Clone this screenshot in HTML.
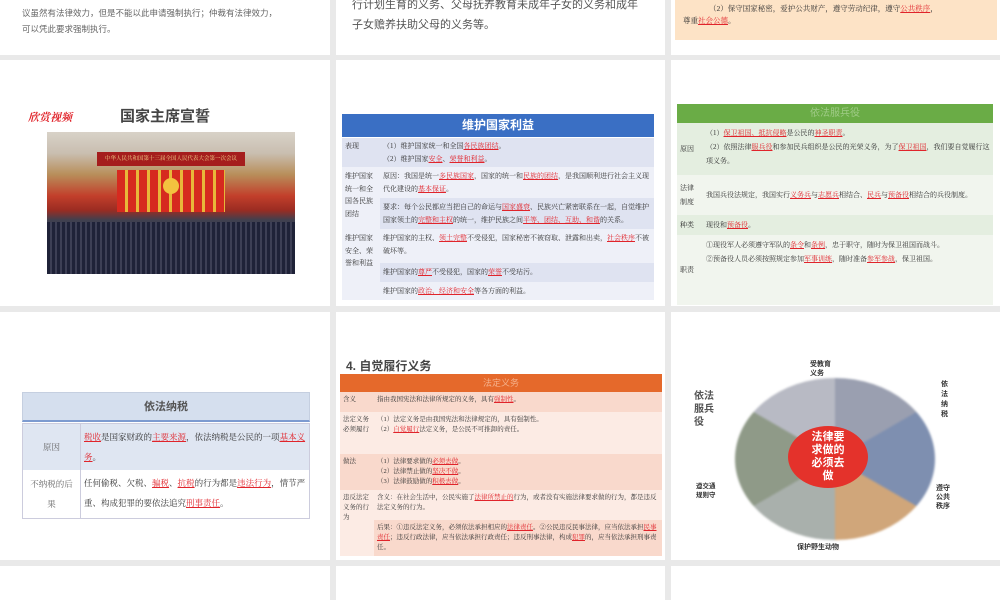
<!DOCTYPE html>
<html><head><meta charset="utf-8"><style>
*{margin:0;padding:0;box-sizing:border-box}
body{width:1000px;height:600px;background:#e9e9e9;position:relative;overflow:hidden;font-family:"Liberation Serif","Noto Serif CJK SC",serif;color:#333}
.s{position:absolute;background:#fff;overflow:hidden}
.r{color:#e0242b;text-decoration:underline}
.sans{font-family:"Liberation Sans","Noto Sans CJK SC",sans-serif}
table{border-collapse:collapse;width:100%}
td{vertical-align:top}
</style></head><body>
<!-- row 0 -->
<div class="s" style="left:0;top:0;width:330px;height:55px">
<div class="sans" style="position:absolute;left:22px;top:5px;font-size:8.5px;color:#666;line-height:16px">议虽然有法律效力，但是不能以此申请强制执行；仲裁有法律效力，<br>可以凭此要求强制执行。</div></div>
<div class="s" style="left:336px;top:0;width:329px;height:55px">
<div class="sans" style="position:absolute;left:16px;top:-5px;font-size:11px;color:#555;line-height:20px">行计划生育的义务、父母抚养教育未成年子女的义务和成年<br>子女赡养扶助父母的义务等。</div></div>
<div class="s" style="left:671px;top:0;width:329px;height:55px">
<div style="position:absolute;left:4px;top:0;width:322px;height:40px;background:#fde3c6;font-size:7.5px;padding:3px 0 0 34px;line-height:12px">（2）保守国家秘密，爱护公共财产，遵守劳动纪律，遵守<span class="r">公共秩序</span>，<br><span style="margin-left:-26px">尊重</span><span class="r">社会公德</span>。</div></div>
<!-- row 1 -->
<div class="s" style="left:0;top:60px;width:330px;height:246px">
<div style="position:absolute;left:28px;top:49px;font-size:11px;color:#e0242b;font-weight:bold;font-style:italic">欣赏视频</div>
<div class="sans" style="position:absolute;left:120px;top:45px;font-size:15px;font-weight:bold;color:#444">国家主席宣誓</div>
<div style="position:absolute;left:47px;top:72px;width:248px;height:142px;background:linear-gradient(#d8d2c8 0,#c9beb0 15%,#b88e5a 30%,#c23f2b 45%,#9b2c22 55%,#40404f 62%,#2a2d45 100%)">
<div style="position:absolute;left:50px;top:20px;width:148px;height:14px;background:#a51d1d;color:#f6d78d;font-size:5.5px;text-align:center;line-height:14px">中华人民共和国第十三届全国人民代表大会第一次会议</div>
<div style="position:absolute;left:70px;top:38px;width:108px;height:42px;background:repeating-linear-gradient(90deg,#d62a1f 0 8px,#e8b73a 8px 11px)"></div>
<div style="position:absolute;left:116px;top:46px;width:16px;height:16px;border-radius:50%;background:#f3c23f"></div>
<div style="position:absolute;left:0;top:90px;width:248px;height:52px;background:repeating-linear-gradient(90deg,#1f2238 0 3px,#3d3f55 3px 5px)"></div>
</div></div>
<div class="s" style="left:336px;top:60px;width:329px;height:246px">
<div class="sans" style="position:absolute;left:6px;top:54px;width:312px;height:23px;background:#3a6fc4;color:#fff;font-size:12px;font-weight:bold;text-align:center;line-height:23px">维护国家利益</div>
<table style="position:absolute;left:6px;top:78px;width:312px;font-size:7px;line-height:12.5px">
<tr style="background:#dfe3f1"><td style="width:38px;padding:2px 3px;height:29px">表现</td><td style="padding:2px 3px">（1）维护国家统一和全国<span class="r">各民族团结</span>。<br>（2）维护国家<span class="r">安全</span>、<span class="r">荣誉和利益</span>。</td></tr>
<tr style="background:#eef0f8"><td rowspan="2" style="padding:3px">维护国家统一和全国各民族团结</td><td style="padding:3px">原因：我国是统一<span class="r">多民族国家</span>，国家的统一和<span class="r">民族的团结</span>，是我国顺利进行社会主义现代化建设的<span class="r">基本保证</span>。</td></tr>
<tr style="background:#dfe3f1"><td style="padding:3px">要求：每个公民都应当把自己的命运与<span class="r">国家盛衰</span>、民族兴亡紧密联系在一起，自觉维护国家领土的<span class="r">完整和主权</span>的统一，维护民族之间<span class="r">平等、团结、互助、和谐</span>的关系。</td></tr>
<tr style="background:#eef0f8"><td rowspan="3" style="padding:3px">维护国家安全、荣誉和利益</td><td style="padding:3px;height:34px">维护国家的主权、<span class="r">领土完整</span>不受侵犯，国家秘密不被窃取、泄露和出卖，<span class="r">社会秩序</span>不被破坏等。</td></tr>
<tr style="background:#dfe3f1"><td style="padding:3px">维护国家的<span class="r">尊严</span>不受侵犯，国家的<span class="r">荣誉</span>不受玷污。</td></tr>
<tr style="background:#eef0f8"><td style="padding:3px">维护国家的<span class="r">政治、经济和安全</span>等各方面的利益。</td></tr>
</table></div>
<div class="s" style="left:671px;top:60px;width:329px;height:246px">
<div class="sans" style="position:absolute;left:6px;top:44px;width:316px;height:19px;background:#6aac46;color:#9fcb86;font-size:10px;text-align:center;line-height:19px">依法服兵役</div>
<table style="position:absolute;left:6px;top:63px;width:316px;font-size:7px;line-height:14px">
<tr style="background:#e4eee0"><td style="width:26px;padding:3px;height:52px;vertical-align:middle">原因</td><td style="padding:3px">（1）<span class="r">保卫祖国、抵抗侵略</span>是公民的<span class="r">神圣职责</span>。<br>（2）依照法律<span class="r">服兵役</span>和参加民兵组织是公民的光荣义务，为了<span class="r">保卫祖国</span>，我们要自觉履行这项义务。</td></tr>
<tr style="background:#f1f5ee"><td style="padding:3px;height:40px;vertical-align:middle">法律制度</td><td style="padding:3px;vertical-align:middle">我国兵役法规定，我国实行<span class="r">义务兵</span>与<span class="r">志愿兵</span>相结合、<span class="r">民兵</span>与<span class="r">预备役</span>相结合的兵役制度。</td></tr>
<tr style="background:#e4eee0"><td style="padding:3px">种类</td><td style="padding:3px">现役和<span class="r">预备役</span>。</td></tr>
<tr style="background:#f1f5ee"><td style="padding:3px;height:70px;vertical-align:middle">职责</td><td style="padding:3px">①现役军人必须遵守军队的<span class="r">条令</span>和<span class="r">条例</span>，忠于职守，随时为保卫祖国而战斗。<br>②预备役人员必须按照规定参加<span class="r">军事训练</span>，随时准备<span class="r">参军参战</span>，保卫祖国。</td></tr>
</table></div>
<!-- row 2 -->
<div class="s" style="left:0;top:312px;width:330px;height:248px">
<div class="sans" style="position:absolute;left:22px;top:80px;width:288px;height:30px;background:#d5dfee;border:1px solid #c5cfe0;border-bottom:2px solid #7d9bd0;font-size:11px;font-weight:bold;color:#555;text-align:center;line-height:28px">依法纳税</div>
<table style="position:absolute;left:22px;top:111px;width:288px;font-size:8.5px;line-height:20px;border:1px solid #ccd">
<tr style="background:#dfe6f2"><td style="width:58px;padding:4px;text-align:center;vertical-align:middle;color:#666;border-right:1px solid #ccd">原因</td><td style="padding:3px">  <span class="r">税收</span>是国家财政的<span class="r">主要来源</span>，依法纳税是公民的一项<span class="r">基本义务</span>。</td></tr>
<tr><td style="padding:4px;text-align:center;vertical-align:middle;color:#666;border-right:1px solid #ccd">不纳税的后果</td><td style="padding:3px">任何偷税、欠税、<span class="r">骗税</span>、<span class="r">抗税</span>的行为都是<span class="r">违法行为</span>，情节严重、构成犯罪的要依法追究<span class="r">刑事责任</span>。</td></tr>
</table></div>
<div class="s" style="left:336px;top:312px;width:329px;height:248px">
<div class="sans" style="position:absolute;left:10px;top:45px;font-size:12px;font-weight:bold;color:#444">4. 自觉履行义务</div>
<div class="sans" style="position:absolute;left:4px;top:62px;width:322px;height:18px;background:#e5692b;color:#f5b08a;font-size:9px;text-align:center;line-height:18px">法定义务</div>
<table style="position:absolute;left:4px;top:80px;width:322px;font-size:6.5px;line-height:10px">
<tr style="background:#f9d9cc"><td style="width:34px;padding:3px;height:20px">含义</td><td style="padding:3px">指由我国宪法和法律所规定的义务，具有<span class="r">强制性</span>。</td></tr>
<tr style="background:#fcebe4"><td style="padding:3px;height:42px">法定义务必须履行</td><td style="padding:3px">（1）法定义务是由我国宪法和法律规定的，具有强制性。<br>（2）<span class="r">自觉履行</span>法定义务，是公民不可推卸的责任。</td></tr>
<tr style="background:#f9d9cc"><td style="padding:3px;height:36px">做法</td><td style="padding:3px">（1）法律要求做的<span class="r">必须去做</span>。<br>（2）法律禁止做的<span class="r">坚决不做</span>。<br>（3）法律鼓励做的<span class="r">积极去做</span>。</td></tr>
<tr style="background:#fcebe4"><td rowspan="2" style="padding:3px">违反法定义务的行为</td><td style="padding:3px;height:30px">含义：在社会生活中，公民实施了<span class="r">法律所禁止的</span>行为，或者没有实施法律要求做的行为，都是违反法定义务的行为。</td></tr>
<tr style="background:#f9d9cc"><td style="padding:3px">后果：①违反法定义务，必须依法承担相应的<span class="r">法律责任</span>。②公民违反民事法律，应当依法承担<span class="r">民事责任</span>；违反行政法律，应当依法承担行政责任；违反刑事法律，构成<span class="r">犯罪</span>的，应当依法承担刑事责任。</td></tr>
</table></div>
<div class="s sans" style="left:671px;top:312px;width:329px;height:248px">
<div style="position:absolute;left:64px;top:66px;width:200px;height:162px;border-radius:50%;background:conic-gradient(#9a9fb0 0 60deg,#7e8fb0 60deg 120deg,#d0a67a 120deg 180deg,#a9b0ac 180deg 240deg,#8f9a88 240deg 300deg,#b8bac4 300deg 360deg);filter:blur(1px)"></div>
<div style="position:absolute;left:117px;top:114px;width:80px;height:62px;border-radius:50%;background:#e4322b;color:#fff;font-size:11px;font-weight:bold;text-align:center;line-height:13px;padding-top:5px">法律要<br>求做的<br>必须去<br>做</div>
<div style="position:absolute;left:139px;top:48px;font-size:7px;font-weight:bold;line-height:9px">受教育<br>义务</div>
<div style="position:absolute;left:23px;top:78px;font-size:10px;font-weight:bold;line-height:13px;color:#555">依法<br>服兵<br>役</div>
<div style="position:absolute;left:270px;top:68px;width:8px;font-size:7px;font-weight:bold;line-height:10px">依法纳税</div>
<div style="position:absolute;left:25px;top:170px;font-size:6.5px;font-weight:bold;line-height:9px">遵交通<br>规则守</div>
<div style="position:absolute;left:265px;top:172px;font-size:7px;font-weight:bold;line-height:9px">遵守<br>公共<br>秩序</div>
<div style="position:absolute;left:126px;top:230px;font-size:7px;font-weight:bold">保护野生动物</div>
</div>
<!-- row 3 -->
<div class="s" style="left:0;top:566px;width:330px;height:34px"></div>
<div class="s" style="left:336px;top:566px;width:329px;height:34px"></div>
<div class="s" style="left:671px;top:566px;width:329px;height:34px"></div>
</body></html>
